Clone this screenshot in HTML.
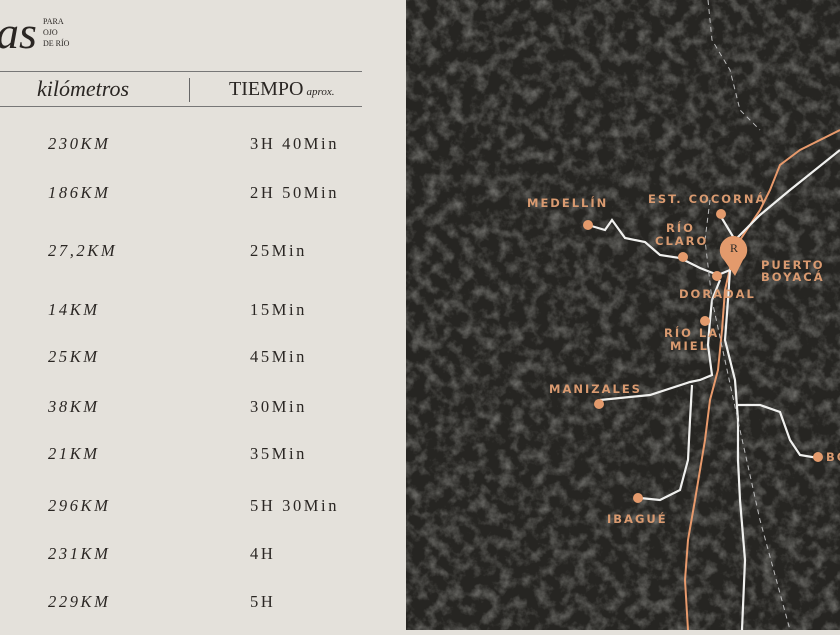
<!DOCTYPE html><html><head><meta charset="utf-8"><style>
body{margin:0;width:840px;height:630px;overflow:hidden;background:#e4e1db;position:relative;font-family:"Liberation Serif",serif;color:#2a2623}
.a{position:absolute;white-space:nowrap}
.km{left:48px;font-style:italic;font-size:16.5px;letter-spacing:2.6px}
.t{left:250px;font-size:16.5px;letter-spacing:2.6px}
.map{position:absolute;left:406px;top:0;width:434px;height:630px;background:#262522}
.lb{font-family:"DejaVu Sans","Liberation Sans",sans-serif;font-weight:bold;font-size:11.5px;letter-spacing:2px;fill:#d99a70}
</style></head><body>
<div class="a" style="left:-4px;top:6px;font-size:46px;font-style:italic">as</div>
<div class="a" style="left:43px;top:16px;font-size:8px;line-height:11px">PARA<br>OJO<br>DE RÍO</div>
<div class="a" style="left:0;top:71px;width:362px;border-top:1.5px solid #777"></div>
<div class="a" style="left:0;top:106px;width:362px;border-top:1.5px solid #777"></div>
<div class="a" style="left:189px;top:78px;height:24px;border-left:1px solid #666"></div>
<div class="a" style="left:37px;top:76px;font-size:22px;font-style:italic">kilómetros</div>
<div class="a" style="left:229px;top:78px;font-size:20px">TIEMPO<span style="font-size:11px;font-style:italic;margin-left:3px">aprox.</span></div>
<div class="a km" style="top:134px">230KM</div><div class="a t" style="top:134px">3H 40Min</div>
<div class="a km" style="top:183px">186KM</div><div class="a t" style="top:183px">2H 50Min</div>
<div class="a km" style="top:241px">27,2KM</div><div class="a t" style="top:241px">25Min</div>
<div class="a km" style="top:300px">14KM</div><div class="a t" style="top:300px">15Min</div>
<div class="a km" style="top:347px">25KM</div><div class="a t" style="top:347px">45Min</div>
<div class="a km" style="top:397px">38KM</div><div class="a t" style="top:397px">30Min</div>
<div class="a km" style="top:444px">21KM</div><div class="a t" style="top:444px">35Min</div>
<div class="a km" style="top:496px">296KM</div><div class="a t" style="top:496px">5H 30Min</div>
<div class="a km" style="top:544px">231KM</div><div class="a t" style="top:544px">4H</div>
<div class="a km" style="top:592px">229KM</div><div class="a t" style="top:592px">5H</div>
<div class="map"><svg width="434" height="630" viewBox="406 0 434 630">
<filter id="n"><feTurbulence type="fractalNoise" baseFrequency="0.08" numOctaves="4" seed="3"/><feColorMatrix values="0 0 0 0 0.55  0 0 0 0 0.55  0 0 0 0 0.52  0 0 0 0.9 -0.38"/></filter>
<rect x="406" y="0" width="434" height="630" filter="url(#n)"/>
<g fill="none" stroke="#e89a6c" stroke-width="2">
<path d="M840 130 L800 150 L780 165 L770 190 L760 210 L740 240 L732 260 L725 290 L722 330 L718 370 L710 400 L705 440 L700 470 L695 500 L688 540 L685 580 L688 630"/>
</g>
<g fill="none" stroke="#f0f0ee" stroke-width="2.2">
<path d="M588 225 L605 230 L612 220 L625 238 L645 242 L660 255 L680 258 L700 268 L718 275 L730 270"/>
<path d="M720 215 L735 240 L760 215 L790 190 L840 150"/>
<path d="M730 270 L728 300 L725 340 L730 360 L735 380 L738 420 L738 460 L740 500 L745 560 L742 630"/>
<path d="M720 280 L712 300 L710 320 L708 345 L712 375 L700 380 L690 382 L650 395 L600 400"/>
<path d="M692 385 L690 420 L688 460 L680 490 L660 500 L640 498"/>
<path d="M738 405 L760 405 L780 412 L790 440 L800 455 L818 458"/>
</g>
<g fill="none" stroke="#bbb" stroke-width="1" stroke-dasharray="5 4">
<path d="M708 0 L712 40 L730 70 L740 110 L760 130"/>
<path d="M710 200 L705 240 L712 300 L740 430 L760 520 L790 630"/>
</g>
<g fill="#e39a6c">
<circle cx="588" cy="225" r="5"/><circle cx="721" cy="214" r="5"/><circle cx="683" cy="257" r="5"/><circle cx="717" cy="276" r="5"/><circle cx="705" cy="321" r="5"/><circle cx="599" cy="404" r="5"/><circle cx="638" cy="498" r="5"/><circle cx="818" cy="457" r="5"/>
<path d="M733 236 a14 14 0 0 1 10 24 L735 276 L724 260 a14 14 0 0 1 9 -24z"/>
</g>
<text x="734" y="252" font-size="12" text-anchor="middle" fill="#2b2a26" font-family="Liberation Serif">R</text>
<text class="lb" x="527" y="207">MEDELLÍN</text>
<text class="lb" x="648" y="203">EST. COCORNÁ</text>
<text class="lb" x="666" y="232">RÍO</text><text class="lb" x="655" y="245">CLARO</text>
<text class="lb" x="761" y="269">PUERTO</text><text class="lb" x="761" y="281">BOYACÁ</text>
<text class="lb" x="679" y="298">DORADAL</text>
<text class="lb" x="664" y="337">RÍO LA</text><text class="lb" x="670" y="350">MIEL</text>
<text class="lb" x="549" y="393">MANIZALES</text>
<text class="lb" x="607" y="523">IBAGUÉ</text>
<text class="lb" x="826" y="461">BO</text>
</svg></div>
</body></html>
